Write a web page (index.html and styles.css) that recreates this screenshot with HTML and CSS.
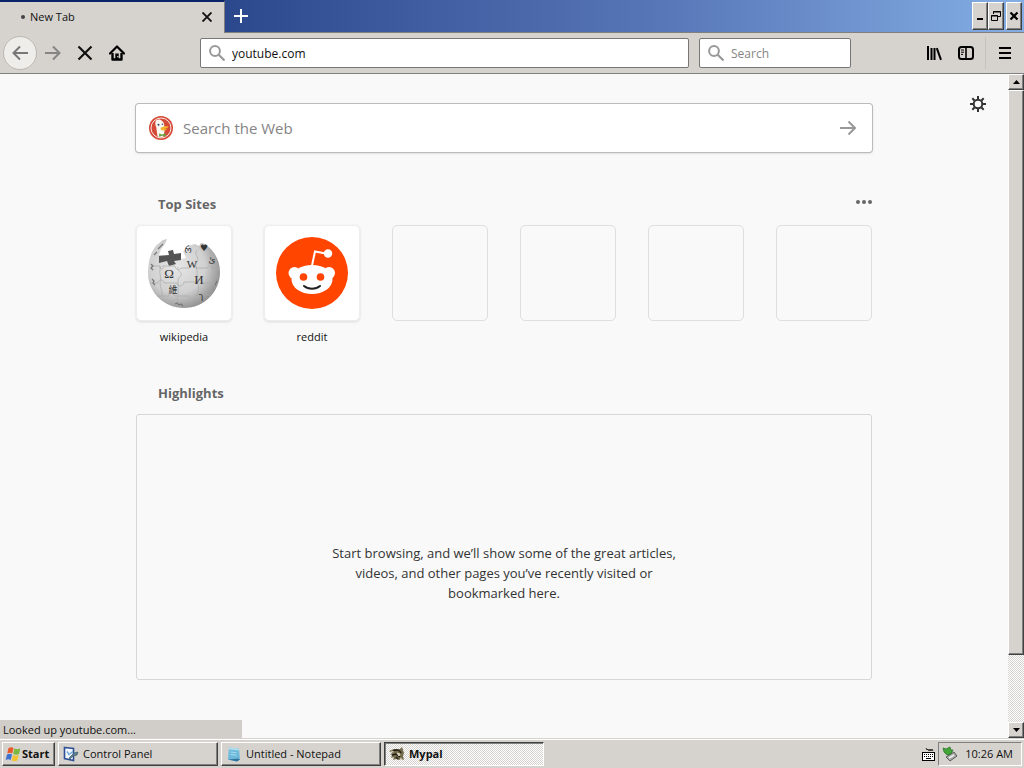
FILE: index.html
```html
<!DOCTYPE html>
<html lang="en">
<head>
    <meta charset="UTF-8">
    <meta name="viewport" content="width=device-width, initial-scale=1.0">
    <title>New Tab</title>
    <link rel="stylesheet" href="styles.css">
</head>
<body>
    <header class="tab-strip">
        <div class="tab">
            <span class="tab-dot"></span>
            <span class="tab-title">New Tab</span>
            <button class="icon-button tab-close" aria-label="Close tab">
                <svg width="10" height="10" viewBox="0 0 10 10"><path d="M.5.5l9 9M9.5.5l-9 9" stroke="#111" stroke-width="1.9"/></svg>
            </button>
        </div>
        <button class="icon-button new-tab" aria-label="Open a new tab">
            <svg width="14" height="14" viewBox="0 0 14 14"><path d="M7 0v14M0 7h14" stroke="#fff" stroke-width="2"/></svg>
        </button>
        <div class="window-controls">
            <button aria-label="Minimize"><svg width="12" height="12" viewBox="0 0 12 12"><path d="M3 9h6" stroke="#000" stroke-width="2"/></svg></button>
            <button aria-label="Restore"><svg width="12" height="12" viewBox="0 0 12 12"><path d="M3.500 4V1.500h7v5H8M3 2h8M1.500 5.500h6v5h-6zM1 6h7" fill="none" stroke="#000"/></svg></button>
            <button class="close" aria-label="Close"><svg width="12" height="12" viewBox="0 0 12 12"><path d="M2.500 2.500l7 7M9.500 2.500l-7 7" stroke="#000" stroke-width="2.200"/></svg></button>
        </div>
    </header>

    <nav class="toolbar">
        <button class="icon-button back" aria-label="Back">
            <svg width="16" height="16" viewBox="0 0 16 16"><path d="M8 1.500L1.500 8 8 14.500M1.500 8H16" fill="none" stroke="#777" stroke-width="2"/></svg>
        </button>
        <button class="icon-button" aria-label="Forward">
            <svg width="16" height="16" viewBox="0 0 16 16"><path d="M8 1.500L14.500 8 8 14.500M14.500 8H0" fill="none" stroke="#858585" stroke-width="2"/></svg>
        </button>
        <button class="icon-button" aria-label="Stop">
            <svg width="16" height="16" viewBox="0 0 16 16"><path d="M1.500 1.500l13 13M14.500 1.500l-13 13" stroke="#111" stroke-width="2.200"/></svg>
        </button>
        <button class="icon-button" aria-label="Home">
            <svg width="16" height="16" viewBox="0 0 16 16"><path d="M1 8.500l7-7 7 7" fill="none" stroke="#000" stroke-width="2.200" stroke-linecap="round" stroke-linejoin="round"/><path d="M3.500 8v6.500h9V8" fill="none" stroke="#000" stroke-width="2.400" stroke-linejoin="round"/><path d="M6.300 14V8.500h3.400V14z"/><path d="M8.300 11h1v1.200h-1z" fill="#fff"/></svg>
        </button>
        <span class="spacer"></span>
        <label class="field url-field">
            <svg width="16" height="16" viewBox="0 0 16 16"><circle cx="6" cy="6" r="4.900" fill="none" stroke="#999" stroke-width="2"/><path d="M9.500 9.500l6 6" stroke="#999" stroke-width="2.200"/></svg>
            <input type="text" value="youtube.com" aria-label="Address">
        </label>
        <label class="field search-field">
            <svg width="16" height="16" viewBox="0 0 16 16"><circle cx="6" cy="6" r="4.900" fill="none" stroke="#999" stroke-width="2"/><path d="M9.500 9.500l6 6" stroke="#999" stroke-width="2.200"/></svg>
            <input type="text" placeholder="Search" aria-label="Search">
        </label>
        <span class="spacer"></span>
        <button class="icon-button" aria-label="Library">
            <svg width="16" height="16" viewBox="0 0 16 16"><path d="M2 1v14M5.500 3v12M8.500 3v12M10.800 3.200l4.200 11.600" stroke="#000" stroke-width="2"/></svg>
        </button>
        <button class="icon-button" aria-label="Sidebars">
            <svg width="16" height="16" viewBox="0 0 16 16"><rect x="1" y="2" width="14" height="12" rx="2.500" fill="none" stroke="#000" stroke-width="2"/><path d="M8 2v12" stroke="#000" stroke-width="1.600"/><path d="M3 5h3M3 7.200h3M3 9.400h2" stroke="#000"/></svg>
        </button>
        <span class="separator"></span>
        <button class="icon-button" aria-label="Menu">
            <svg width="12" height="12" viewBox="0 0 12 12"><path d="M0 1h12M0 6h12M0 11h12" stroke="#000" stroke-width="2"/></svg>
        </button>
    </nav>

    <div class="viewport">
        <main class="page">
            <button class="icon-button settings" aria-label="Customize this page">
                <svg width="16" height="16" viewBox="0 0 16 16"><circle cx="8" cy="8" r="4.300" fill="none" stroke="#333" stroke-width="2"/><path d="M8 0v3M8 13v3M0 8h3M13 8h3M2.300 2.300l2.200 2.200M11.500 11.500l2.200 2.200M13.700 2.300l-2.200 2.200M4.500 11.500l-2.200 2.200" stroke="#333" stroke-width="2"/></svg>
            </button>

            <form class="web-search">
                <svg width="24" height="24" viewBox="0 0 24 24">
                    <circle cx="12" cy="12" r="12" fill="#d64a38"/>
                    <circle cx="12" cy="12" r="10" fill="none" stroke="#f7e9e4" stroke-width="1"/>
                    <path d="M7 4.500c2-1.500 5-1 6.300.8 1.700 1.200 2.200 3.400 1.900 5.400l.3 4.300-1 5.500c-1.800 1-4.400 1-6-.2L7.200 11C6 9 6 6 7 4.500z" fill="#fbf8ef"/>
                    <circle cx="9.500" cy="8.800" r="1" fill="#2d4b6b"/><circle cx="13.400" cy="8.300" r=".8" fill="#2d4b6b"/>
                    <path d="M11.500 12c2-1.500 5-2 8-1.600-.5 1.500-3 2.200-4.500 2.400 1.300.5 2.500.6 3.500.4-1.500 1.600-5.200 1.800-6.600.6z" fill="#f6b52c"/>
                    <path d="M10 17.500l3 1 3.500-1.200.3 3.200-3.600-.7-3 1z" fill="#67a347"/>
                </svg>
                <input type="text" placeholder="Search the Web" aria-label="Search the Web">
                <button class="icon-button" type="button" aria-label="Search">
                    <svg width="16" height="16" viewBox="0 0 16 16"><path d="M8.500 1.500L15 8l-6.500 6.500M15 8H0" fill="none" stroke="#999" stroke-width="2"/></svg>
                </button>
            </form>

            <section class="top-sites">
                <div class="section-head">
                    <h2>Top Sites</h2>
                    <button class="icon-button more" aria-label="Section menu">
                        <svg width="16" height="4" viewBox="0 0 16 4" fill="#666"><circle cx="2" cy="2" r="2"/><circle cx="8" cy="2" r="2"/><circle cx="14" cy="2" r="2"/></svg>
                    </button>
                </div>
                <div class="tiles">
                    <a class="site" href="#">
                        <span class="tile filled">
                            <svg width="76" height="72" viewBox="0 0 76 72">
                                <defs>
                                    <radialGradient id="globe" cx=".4" cy=".4" r=".65">
                                        <stop offset="0" stop-color="#e6e6e6"/>
                                        <stop offset=".6" stop-color="#d0d0d0"/>
                                        <stop offset="1" stop-color="#8c8c8c"/>
                                    </radialGradient>
                                </defs>
                                <path d="M11 8l6-5 4-1-2 5-4 5-2 6h20l2 4 5-1-3-7 6-2-1-3 7-2 4 2 2-3 4 1C69 14 74 24 74 35c0 20-16 36-36 36S2 55 2 36C2 24 5 14 11 8z" fill="url(#globe)"/>
                                <path d="M13 19l10-1-1-4 5-1 1 4 7-1v7l-7 1 2 3-7 2-2-5-8 2z" fill="#555"/>
                                <g fill="none" stroke="#aaa" stroke-width=".7">
                                    <path d="M5 29h9c-2 4 5 4 3 0h12c0 3 4 5 6 2h8c3-4 6-3 7 0h11c2-3 6-2 5 1h7M4 46h8c0-4 6-4 6 0h13c0 4 7 4 7-1h12c0-4 6-3 6 1h14M11 59h12c-1-3 5-4 6 0h14c1 3 6 3 7-1h15"/>
                                    <path d="M15 29c-3 8 1 10-1 17 0 5 3 8 2 13M32 30c-2 5 5 4 3 9-5 3-2 6-3 12 1 6-2 11 1 19M51 13c-4 4 3 7 0 12-3 3 1 7 0 13-1 6 4 12 0 20M65 15c-3 6 4 9 1 15 3 4 0 10 1 17"/>
                                </g>
                                <g class="globe-letters" text-anchor="middle">
                                    <text x="23" y="41">Ω</text>
                                    <text x="46" y="31" class="medium">W</text>
                                    <text x="53" y="47">И</text>
                                    <text x="27" y="56" class="cjk">維</text>
                                    <text x="55" y="62" class="small">ך</text>
                                    <text x="66" y="26" class="small">ئ</text>
                                    <text x="42" y="16" class="small">რ</text>
                                    <text x="58" y="14" class="small">♥</text>
                                </g>
                                <path d="M5 27l2 2-2 2 2 2M8 18l3-3M12 12l5-5M6 42l2 2-1 2 2 2M29 67l2-1 2 2 2-1 2 2M69 48l2-4" fill="none" stroke="#777" stroke-width="1.200"/>
                            </svg>
                        </span>
                        <span class="site-name">wikipedia</span>
                    </a>
                    <a class="site" href="#">
                        <span class="tile filled">
                            <svg width="72" height="72" viewBox="0 0 72 72">
                                <circle cx="36" cy="36" r="36" fill="#ff4500"/>
                                <g fill="#fff"><circle cx="18.500" cy="36" r="6"/><circle cx="53" cy="36" r="6"/><ellipse cx="36" cy="42.500" rx="20.500" ry="14.500"/><circle cx="52" cy="16.500" r="4.200"/></g>
                                <path d="M36 28.500l3-14 12 2.300" fill="none" stroke="#fff" stroke-width="2"/>
                                <circle cx="27.500" cy="40" r="3.800" fill="#ff4500"/><circle cx="44.500" cy="40" r="3.800" fill="#ff4500"/>
                                <path d="M28 49c4 3.500 12 3.500 16 0" fill="none" stroke="#222" stroke-width="2" stroke-linecap="round"/>
                            </svg>
                        </span>
                        <span class="site-name">reddit</span>
                    </a>
                    <span class="tile"></span>
                    <span class="tile"></span>
                    <span class="tile"></span>
                    <span class="tile"></span>
                </div>
            </section>

            <section class="highlights">
                <div class="section-head">
                    <h2>Highlights</h2>
                </div>
                <div class="empty-state">
                    <p>Start browsing, and we’ll show some of the great articles, videos, and other pages you’ve recently visited or bookmarked here.</p>
                </div>
            </section>
        </main>

        <div class="scrollbar">
            <button aria-label="Scroll up"><svg width="7" height="4" viewBox="0 0 7 4"><path d="M0 4l3.500-4L7 4z"/></svg></button>
            <div class="scroll-thumb"></div>
            <div class="scroll-track"></div>
            <button aria-label="Scroll down"><svg width="7" height="4" viewBox="0 0 7 4"><path d="M0 0h7L3.500 4z"/></svg></button>
        </div>

        <div class="status">Looked up youtube.com...</div>
    </div>

    <footer class="taskbar">
        <button class="task start">
            <svg width="16" height="16" viewBox="0 0 16 16"><path d="M3.500 2c2-1 3.500-1 5 0L7.300 7.500c-1.500-1-3-1-5 0z" fill="#e8592b"/><path d="M9.300 2.500c2 1 3.500 1 6 0L14 8c-2 1-3.800 1-5.700 0z" fill="#7ab93e"/><path d="M2 8.500c2-1 3.500-1 5 0L5.700 14c-1.500-1-3-1-5 0z" fill="#3d72d0"/><path d="M8 9c2 1 3.500 1 5.800 0l-1.400 5.500c-2 1-3.800 1-5.700 0z" fill="#f4c430"/></svg>
            Start
        </button>
        <button class="task">
            <svg width="16" height="16" viewBox="0 0 16 16"><path d="M1.500 1.500l9 1v12l-9-2z" fill="#f2f7fc" stroke="#2c4f96" stroke-width="1.600"/><path d="M4 5.500l2 3 4-3" fill="none" stroke="#72a9dc" stroke-width="1.500"/><path d="M6 12l5-5 4-1-1 3-4 1-3 3z" fill="#5d8193" stroke="#31505c" stroke-width=".6"/></svg>
            Control Panel
        </button>
        <button class="task">
            <svg width="16" height="16" viewBox="0 0 16 16"><path d="M3 1.500l10 1 1 11-3 2-9-2z" fill="#6cb9dc"/><path d="M3 1.500l10 1v2l-10-1z" fill="#b5dded"/><path d="M2 13.500l9 2 3-2-2-1z" fill="#33749b"/><path d="M4.500 6l6 .7M4.500 8.500l6 .7" stroke="#a6dcef"/></svg>
            Untitled - Notepad
        </button>
        <button class="task active">
            <svg width="16" height="16" viewBox="0 0 16 16"><path d="M0 5l5-2 6 0 2-2 1 3 1 3-1 3 1 4-3-1-2 1-3-1-3 1 1-3-3 1 1-3-2-1 3-1z" fill="#756b4c"/><path d="M4 5c3-2 7-1 8 2M3 9l4-1 4 3M7 11l2 2" stroke="#201d17" stroke-width="1.500" fill="none"/><path d="M8 7l3 1-1 2zM2 5l3 1M11 12l2 1" fill="#e8dfc1" stroke="#e8dfc1" stroke-width=".8"/></svg>
            Mypal
        </button>
        <span class="task-space"></span>
        <svg class="keyboard" width="14" height="14" viewBox="0 0 14 14"><rect x="1.500" y="5.500" width="12" height="8" fill="#fff" stroke="#000"/><path d="M3 7.500h10M3 9.500h10" stroke="#000" stroke-dasharray="1 1"/><path d="M5 11.500h5" stroke="#000"/><path d="M5 1l1 2 1-1 1 2 1-2 1 2 1-2 1 2" fill="none" stroke="#000" stroke-width=".8"/></svg>
        <div class="tray">
            <svg width="16" height="16" viewBox="0 0 16 16"><path d="M4 11l8-5 3 4-7 5z" fill="#aaa" stroke="#444" stroke-width=".8"/><path d="M7 12l5-3" stroke="#eee" stroke-width="1.500"/><path d="M1 2l3 1 4-2 1 3 2 0-2 4-4 1-3-3z" fill="#43a538" stroke="#226d23" stroke-width=".7"/></svg>
            <time>10:26 AM</time>
        </div>
    </footer>
</body>
</html>
```
FILE: styles.css
```css
:root {
    --face: #d6d3ce;
    --light: #ffffff;
    --shadow: #808080;
    --dark: #404040;
    --page-bg: #f9f9f9;
    --ui-font: 'Open Sans', 'Noto Sans', sans-serif;
}

* {
    margin: 0;
    padding: 0;
    box-sizing: border-box;
}

body {
    display: flex;
    flex-direction: column;
    height: 100vh;
    overflow: hidden;
    font-family: var(--ui-font);
    font-size: 11px;
    color: #111;
    background-color: var(--face);
}

svg {
    display: block;
    flex: none;
}

button,
input {
    font: inherit;
    color: inherit;
}

.icon-button {
    display: flex;
    align-items: center;
    justify-content: center;
    width: 32px;
    height: 32px;
    border: none;
    background: none;
}

/* Title bar and tabs */
.tab-strip {
    display: flex;
    flex: none;
    height: 33px;
    background: linear-gradient(to right, #0a246a, #2b488d 22%, #5877b8 65%, #84aee4);
}

.tab {
    display: flex;
    align-items: center;
    width: 225px;
    padding: 0 0 2px 21px;
    border-top: 2px solid #0a246a;
    border-right: 1px solid var(--shadow);
    background-color: var(--face);
}

.tab-dot {
    width: 4px;
    height: 4px;
    margin-right: 5px;
    border-radius: 50%;
    background-color: #444;
}

.tab-title {
    flex: 1;
}

.tab-close {
    width: 34px;
}

.new-tab {
    border-bottom: 1px solid var(--shadow);
    height: 33px;
}

.window-controls {
    display: flex;
    flex: 1;
    justify-content: flex-end;
    padding: 2px 2px 2px 0;
    border-bottom: 1px solid var(--shadow);
}

.window-controls button {
    display: flex;
    align-items: center;
    justify-content: center;
    width: 16px;
}

.window-controls .close {
    margin-left: 2px;
}

.window-controls button,
.scrollbar button,
.scroll-thumb,
.task {
    border: 1px solid;
    border-color: var(--light) var(--dark) var(--dark) var(--light);
    background-color: var(--face);
    box-shadow: inset -1px -1px var(--shadow);
}

/* Navigation toolbar */
.toolbar {
    display: flex;
    flex: none;
    align-items: center;
    height: 41px;
    padding: 0 3px;
    border-bottom: 1px solid var(--shadow);
}

.toolbar .back {
    width: 34px;
    height: 34px;
    border: 1px solid #bbb8b3;
    border-radius: 50%;
    background-color: #eeede9;
}

.spacer {
    flex: 0 1 67px;
}

.field {
    display: flex;
    align-items: center;
    gap: 7px;
    height: 30px;
    padding: 0 8px;
    border: 1px solid #777;
    border-radius: 2px;
    background-color: #fff;
    font-size: 12px;
}

.field input {
    flex: 1;
    min-width: 0;
    border: none;
    outline: none;
    background: none;
}

.url-field {
    flex: 1;
    margin-right: 10px;
}

.search-field {
    width: 152px;
}

::placeholder {
    color: #858585;
    opacity: 1;
}

.separator {
    width: 1px;
    height: 32px;
    margin: 0 3px;
    background-color: #c6c3bc;
}

/* New tab page */
.viewport {
    position: relative;
    display: flex;
    flex: 1;
    min-height: 0;
}

.page {
    position: relative;
    flex: 1;
    padding: 30px 32px 0;
    overflow: hidden;
    background-color: var(--page-bg);
}

.settings {
    position: absolute;
    top: 14px;
    right: 14px;
}

.web-search,
.top-sites,
.highlights {
    max-width: 736px;
    margin: 0 auto;
}

.web-search {
    display: flex;
    align-items: center;
    gap: 10px;
    height: 48px;
    padding: 0 8px 0 13px;
    border-radius: 3px;
    background-color: #fff;
    box-shadow: 0 0 0 1px #bbb, 0 1px 3px rgba(0, 0, 0, 0.2);
}

.web-search input {
    flex: 1;
    min-width: 0;
    border: none;
    outline: none;
    font-size: 15px;
}

.section-head {
    display: flex;
    align-items: flex-start;
    justify-content: space-between;
    height: 20px;
    padding-left: 22px;
}

.section-head h2 {
    font-size: 13px;
    line-height: 20px;
    color: #666;
}

.more {
    width: 16px;
    height: 16px;
}

.top-sites {
    margin-top: 42px;
}

.tiles {
    display: flex;
    flex-wrap: wrap;
    justify-content: space-between;
    margin-top: 11px;
}

.site {
    color: #111;
    text-align: center;
    text-decoration: none;
}

.tile {
    display: flex;
    align-items: center;
    justify-content: center;
    width: 96px;
    height: 96px;
    border: 1px solid #dfdfdf;
    border-radius: 5px;
}

.tile.filled {
    border-color: #eee;
    background-color: #fff;
    box-shadow: 0 1px 3px rgba(0, 0, 0, 0.12);
}

.globe-letters {
    font-family: 'Liberation Serif', serif;
    font-size: 13px;
    fill: #333;
}

.globe-letters .medium {
    font-size: 11px;
}

.globe-letters .small {
    font-family: 'DejaVu Sans', sans-serif;
    font-size: 9px;
}

.globe-letters .cjk {
    font-family: 'Noto Sans CJK TC', sans-serif;
    font-size: 9px;
}

.site-name {
    display: block;
    margin-top: 8px;
    line-height: 16px;
}

.highlights {
    margin-top: 38px;
}

.empty-state {
    display: flex;
    align-items: center;
    justify-content: center;
    height: 266px;
    margin-top: 11px;
    padding-top: 52px;
    border: 1px solid #d7d7db;
    border-radius: 3px;
}

.empty-state p {
    max-width: 350px;
    font-size: 13px;
    line-height: 20px;
    text-align: center;
    color: #333;
}

.status {
    position: absolute;
    left: 0;
    bottom: 0;
    width: 242px;
    height: 18px;
    padding-left: 3px;
    line-height: 19px;
    background-color: #d1cec9;
}

/* Scrollbar */
.scrollbar {
    display: flex;
    flex: none;
    flex-direction: column;
    width: 16px;
    background: repeating-conic-gradient(#fff 0 25%, #d6d3ce 0 50%) 0 0 / 2px 2px;
}

.scrollbar button {
    display: flex;
    align-items: center;
    justify-content: center;
    height: 16px;
}

.scroll-thumb {
    flex: 565;
}

.scroll-track {
    flex: 67;
}

/* Taskbar */
.taskbar {
    display: flex;
    flex: none;
    align-items: center;
    gap: 3px;
    height: 30px;
    padding: 0 2px;
    border-top: 1px solid var(--face);
    box-shadow: inset 0 1px var(--light);
}

.task {
    display: flex;
    align-items: center;
    gap: 4px;
    width: 160px;
    height: 24px;
    padding: 0 4px;
    white-space: nowrap;
}

.task.start {
    gap: 1px;
    width: 53px;
    padding: 0 2px;
    font-weight: bold;
}

.task.active {
    border-color: var(--dark) var(--light) var(--light) var(--dark);
    background: repeating-conic-gradient(#fff 0 25%, #d6d3ce 0 50%) 0 0 / 2px 2px;
    box-shadow: inset 1px 1px var(--shadow);
    font-weight: bold;
}

.task-space {
    flex: 1;
}

.tray {
    display: flex;
    align-items: center;
    gap: 7px;
    height: 24px;
    padding: 0 8px 0 3px;
    border: 1px solid;
    border-color: var(--shadow) var(--light) var(--light) var(--shadow);
    white-space: nowrap;
}
```
